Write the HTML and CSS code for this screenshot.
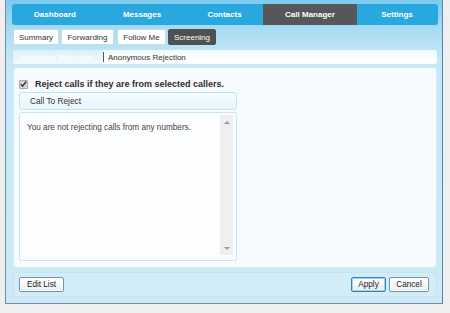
FILE: index.html
```html
<!DOCTYPE html>
<html lang="en">
<head>
    <meta charset="UTF-8">
    <title>Call Manager - Screening</title>
    <link rel="stylesheet" href="styles.css">
</head>
<body>

<div class="frame">
    <ul class="nav">
        <li class="nav-dash">Dashboard</li>
        <li class="nav-msg">Messages</li>
        <li class="nav-con">Contacts</li>
        <li class="nav-cm active">Call Manager</li>
        <li class="nav-set">Settings</li>
    </ul>

    <ul class="subtabs">
        <li class="tab-sum">Summary</li>
        <li class="tab-fwd">Forwarding</li>
        <li class="tab-fol">Follow Me</li>
        <li class="tab-scr active">Screening</li>
    </ul>

    <div class="strip">
        <span class="strip-item current">Selective Rejection</span>
        <span class="strip-sep"></span>
        <span class="strip-item">Anonymous Rejection</span>
    </div>

    <div class="content">
        <div class="check-row">
            <span class="checkbox">
                <svg width="8" height="8" viewBox="0 0 8 8"><path d="M1 4.2 L3 6.4 L7 1.2" fill="none" stroke="#333" stroke-width="1.6"/></svg>
            </span>
            <span class="check-label">Reject calls if they are from selected callers.</span>
        </div>

        <div class="list-head">Call To Reject</div>
        <div class="list-box">
            <p class="empty">You are not rejecting calls from any numbers.</p>
            <div class="scrollbar">
                <span class="arrow up"></span>
                <span class="arrow down"></span>
            </div>
        </div>
    </div>

    <div class="footer">
        <button class="btn btn-edit">Edit List</button>
        <div class="right-btns">
            <button class="btn btn-apply">Apply</button>
            <button class="btn btn-cancel">Cancel</button>
        </div>
    </div>
</div>

</body>
</html>
```

FILE: styles.css
```css
body {
    margin: 0;
    background-color: #efefef;
    font-family: "Liberation Sans", Arial, sans-serif;
    font-size: 8px;
    color: #333;
}
ul {
    list-style: none;
    margin: 0;
    padding: 0;
}

/* outer blue panel */
.frame {
    margin-left: 5px;
    width: 436px;
    height: 299px;
    padding-top: 4px;
    border: 1px solid #6f8fa8;
    border-top: none;
    border-right-color: #4f88b1;
    background: linear-gradient(#7ccbef 0, #a9dcf3 30px, #c6e8f7 60px, #cde9f6 100%);
}

/* top navigation */
.nav {
    display: flex;
    height: 21px;
    margin: 0 4px 0 6px;
    background-color: #29a8e0;
    border-radius: 3px;
    overflow: hidden;
}
.nav li {
    display: flex;
    align-items: center;
    justify-content: center;
    color: white;
    font-weight: bold;
    font-size: 8px;
}
.nav-dash { width: 86px; }
.nav-msg { width: 88px; }
.nav-con { width: 77px; }
.nav-cm { width: 94px; }
.nav-set { width: 80px; }
.nav li.active {
    background-color: #57575a;
}

/* second level tabs */
.subtabs {
    display: flex;
    gap: 2px;
    margin: 4px 0 0 7px;
    height: 16px;
}
.subtabs li {
    display: flex;
    align-items: center;
    justify-content: center;
    box-sizing: border-box;
    background-color: white;
    border: 1px solid #c8dde9;
    border-radius: 2px;
    color: #333;
}
.tab-sum { width: 46px; }
.tab-fwd { width: 53px; }
.tab-fol { width: 49px; margin-left: 1px; }
.tab-scr { width: 48px; }
.subtabs li.active {
    background-color: #505050;
    border-color: #505050;
    color: white;
}

/* third level strip */
.strip {
    display: flex;
    align-items: center;
    height: 14px;
    margin: 5px 5px 0 7px;
    background: linear-gradient(#f4fbfe, #ffffff);
    border-radius: 3px;
    overflow: hidden;
}
.strip-item {
    display: flex;
    align-items: center;
    height: 14px;
    padding: 0 4px;
}
.strip-item.current {
    width: 78px;
    padding-left: 8px;
    color: #fbfdff;
    font-weight: bold;
    white-space: nowrap;
    overflow: hidden;
    background: linear-gradient(#dcf0fa, #f3fafe);
}
.strip-sep {
    width: 1px;
    height: 10px;
    background-color: #555;
}

/* main white panel */
.content {
    height: 199px;
    margin: 3px 5px 0 7px;
    background-color: #f8fbfd;
    border: 1px solid #d3ebf7;
    border-radius: 4px;
    padding: 0 5px;
}
.check-row {
    display: flex;
    align-items: center;
    gap: 7px;
    height: 12px;
    margin: 10px 0 2px 0;
}
.checkbox {
    display: flex;
    align-items: center;
    justify-content: center;
    width: 7px;
    height: 7px;
    background-color: #d8d8d8;
    border: 1px solid #a8a8a8;
    border-radius: 1px;
}
.check-label {
    font-size: 9px;
    font-weight: bold;
    color: #2e2e2e;
}
.list-head {
    width: 206px;
    height: 16px;
    margin-top: 1px;
    padding-left: 10px;
    line-height: 16px;
    color: #333;
    font-size: 8.3px;
    border: 1px solid #bfe2f4;
    border-radius: 3px;
    background: linear-gradient(#f6fcff, #e5f4fc);
}
.list-box {
    position: relative;
    width: 216px;
    height: 147px;
    margin-top: 2px;
    border: 1px solid #c7e6f6;
    border-radius: 3px;
    background-color: #fcfdfe;
}
.empty {
    margin: 10px 0 0 7px;
    font-size: 8.2px;
    color: #444;
}
.scrollbar {
    position: absolute;
    top: 2px;
    right: 3px;
    width: 13px;
    height: 140px;
    background-color: #efefef;
}
.arrow {
    position: absolute;
    left: 4px;
    width: 0;
    height: 0;
    border-left: 3px solid transparent;
    border-right: 3px solid transparent;
}
.arrow.up {
    top: 6px;
    border-bottom: 3px solid #999;
}
.arrow.down {
    bottom: 5px;
    border-top: 3px solid #999;
}

/* bottom button bar */
.footer {
    display: flex;
    justify-content: space-between;
    align-items: center;
    height: 23px;
    margin: 4px 5px 0 7px;
    padding: 0 7px 0 5px;
    background-color: #d2ecf8;
    border: 1px solid #c4e4f3;
    border-radius: 3px;
}
.right-btns {
    display: flex;
    gap: 3px;
}
.btn {
    height: 15px;
    padding: 0;
    font-family: "Liberation Sans", Arial, sans-serif;
    font-size: 8.2px;
    color: #222;
    background: linear-gradient(#ffffff, #e9eef2);
    border: 1px solid #6d95b0;
    border-radius: 2px;
    box-shadow: inset 0 0 0 1px #ffffff;
}
.btn-edit { width: 45px; }
.btn-apply {
    width: 35px;
    border-color: #3b7fae;
    box-shadow: inset 0 0 0 1px #9fd3ef;
}
.btn-cancel { width: 40px; }
```
